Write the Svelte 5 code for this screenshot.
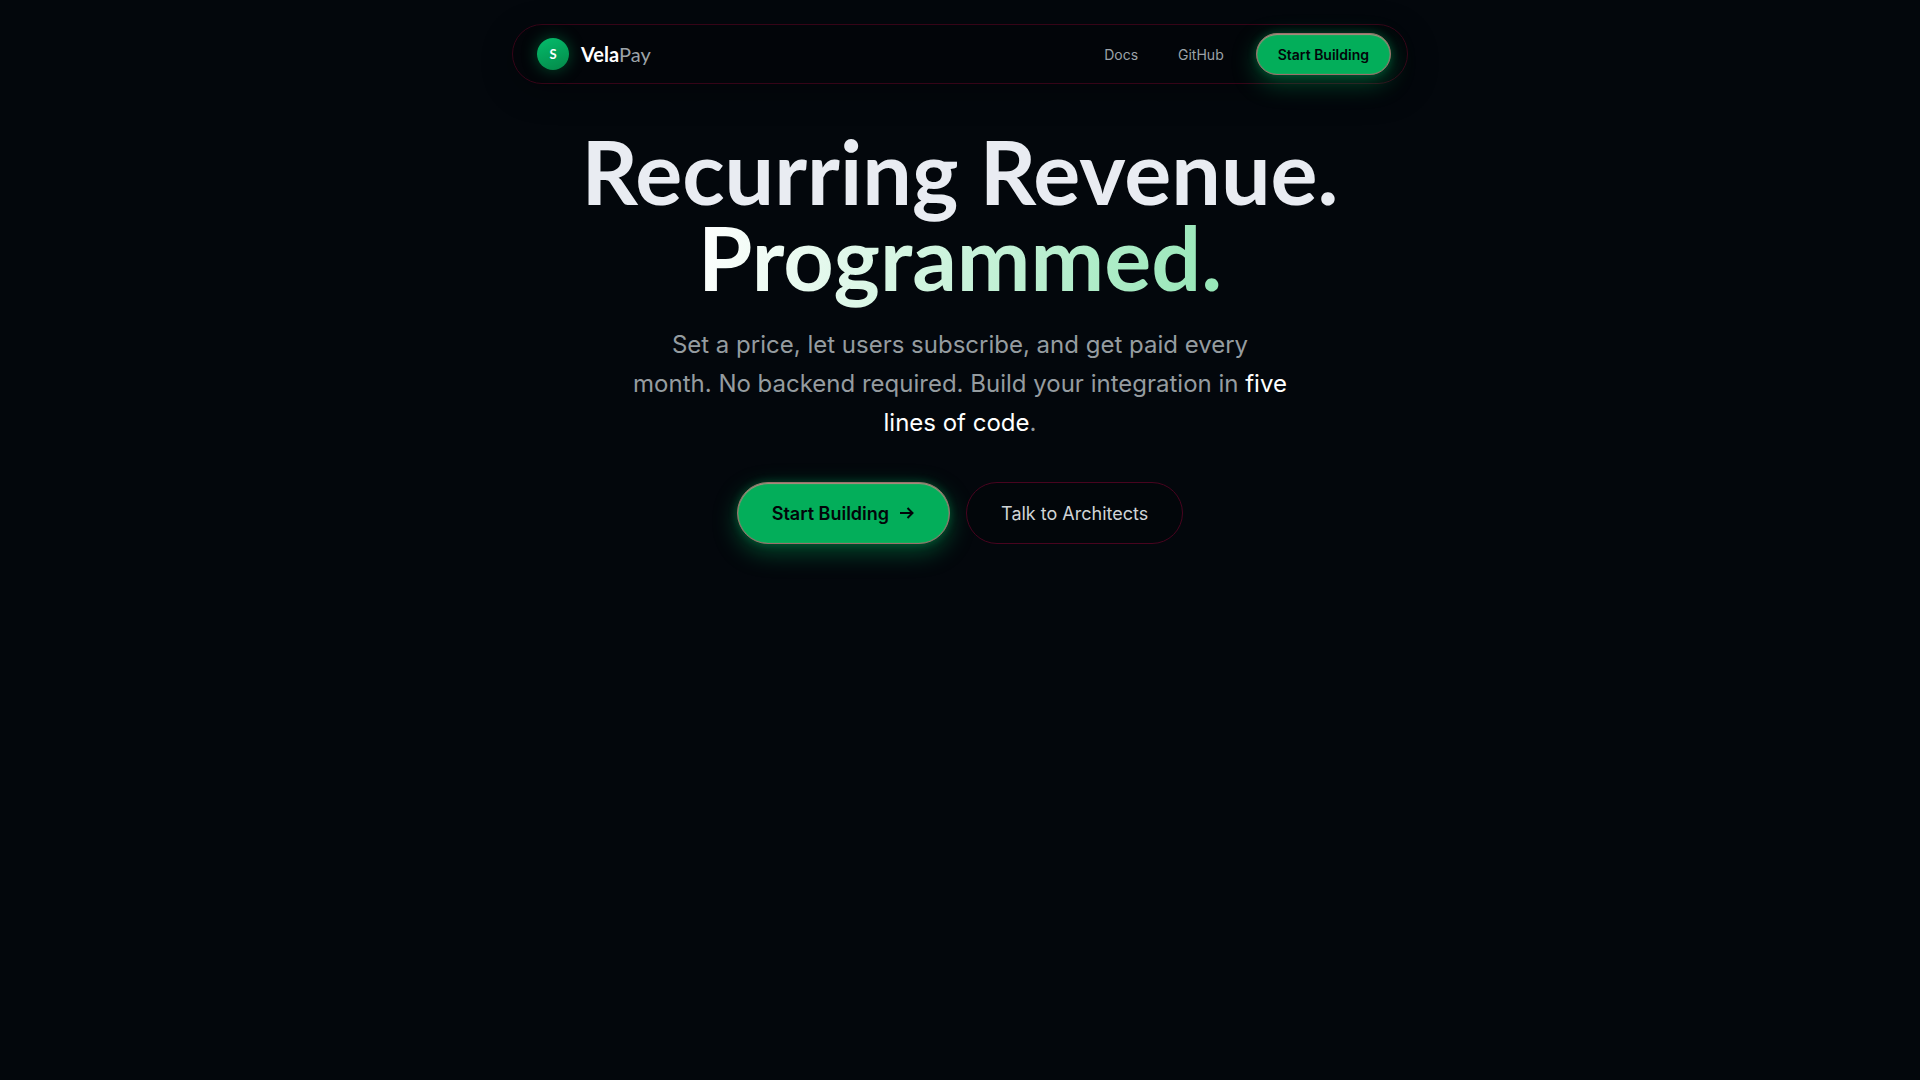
<script lang="ts">
  type NavLink = { label: string; href: string };

  const navLinks: NavLink[] = [
    { label: "Docs", href: "#docs" },
    { label: "GitHub", href: "#github" },
  ];
</script>

<div class="page">
  <header class="nav">
    <a class="brand" href="#top">
      <span class="brand-mark" aria-hidden="true">S</span>
      <span class="brand-name">Vela<span>Pay</span></span>
    </a>
    <nav class="nav-links">
      {#each navLinks as link}
        <a href={link.href}>{link.label}</a>
      {/each}
      <button class="primary small">Start Building</button>
    </nav>
  </header>

  <main class="hero">
    <h1>
      <span class="line">Recurring Revenue.</span>
      <span class="line gradient">Programmed.</span>
    </h1>
    <p>
      Set a price, let users subscribe, and get paid every<br />
      month. No backend required. Build your integration in
      <strong>five lines of code</strong>.
    </p>
    <div class="actions">
      <button class="primary">
        Start Building
        <svg viewBox="0 0 16 16" aria-hidden="true">
          <path d="M1 8h12M8.5 3l5 5-5 5" />
        </svg>
      </button>
      <button class="outline">Talk to Architects</button>
    </div>
  </main>
</div>

<style>
  :global(body) {
    background: #03070c;
  }

  .page {
    min-height: 100vh;
    box-sizing: border-box;
    padding: 24px;
    color: #e9ecf2;
    font-family: Inter, "Open Sans", sans-serif;
  }

  a {
    color: inherit;
    text-decoration: none;
  }

  button {
    border: 1px solid transparent;
    border-radius: 999px;
    font-family: inherit;
    cursor: pointer;
  }

  .nav {
    display: flex;
    align-items: center;
    justify-content: space-between;
    box-sizing: border-box;
    max-width: 896px;
    height: 60px;
    margin: 0 auto;
    padding: 0 16px 0 24px;
    border: 1px solid #350417;
    border-radius: 999px;
    background: #020509;
    box-shadow: 0 8px 32px rgba(0, 0, 0, 0.3);
  }

  .brand {
    display: flex;
    align-items: center;
    gap: 12px;
  }

  .brand-mark {
    display: grid;
    place-items: center;
    width: 32px;
    height: 32px;
    border-radius: 50%;
    color: #fff;
    background: linear-gradient(160deg, #04bd6c, #048848);
    box-shadow: 0 0 16px rgba(0, 179, 95, 0.4);
    font-family: Lato, sans-serif;
    font-size: 13px;
    font-weight: 700;
  }

  .brand-name {
    color: #fff;
    font-family: Lato, sans-serif;
    font-size: 20px;
    font-weight: 700;
  }

  .brand-name span {
    color: #9ca3a8;
    font-weight: 400;
  }

  .nav-links {
    display: flex;
    align-items: center;
    gap: 40px;
    color: #9ca3a8;
    font-size: 14px;
  }

  .primary {
    display: flex;
    align-items: center;
    justify-content: center;
    gap: 10px;
    height: 62px;
    padding: 0 34px;
    border-color: #9c6f6a;
    color: #020509;
    background: #03ae5a;
    box-shadow:
      inset 0 1px 1px #b28a80,
      inset 0 0 1px #b28a80,
      0 8px 24px rgba(0, 179, 95, 0.4),
      0 0 8px rgba(0, 179, 95, 0.3);
    font-size: 18px;
    font-weight: 600;
  }

  .primary.small {
    height: 42px;
    margin-left: -8px;
    padding: 0 21px;
    font-size: 14px;
  }

  .primary svg {
    width: 16px;
    height: 16px;
    fill: none;
    stroke: currentColor;
    stroke-width: 2;
  }

  .outline {
    height: 62px;
    padding: 0 34px;
    border-color: #48041f;
    color: #d0d4d6;
    background: #02060a;
    font-size: 18px;
  }

  .hero {
    display: flex;
    flex-direction: column;
    align-items: center;
    padding-top: 44px;
    text-align: center;
  }

  h1 {
    margin: 0;
    font-family: Lato, sans-serif;
    font-size: 88px;
    font-weight: 700;
    line-height: 86px;
  }

  .line {
    display: block;
    width: fit-content;
    margin: 0 auto;
  }

  .gradient {
    padding-bottom: 16px;
    color: transparent;
    background: linear-gradient(105deg, #fff, #94e6b6);
    background-clip: text;
  }

  p {
    max-width: 672px;
    margin: 9px 0 40px;
    color: #959ca0;
    font-size: 24px;
    line-height: 39px;
  }

  strong {
    color: #fff;
    font-weight: 400;
  }

  .actions {
    display: flex;
    flex-wrap: wrap;
    justify-content: center;
    gap: 16px;
  }
</style>
